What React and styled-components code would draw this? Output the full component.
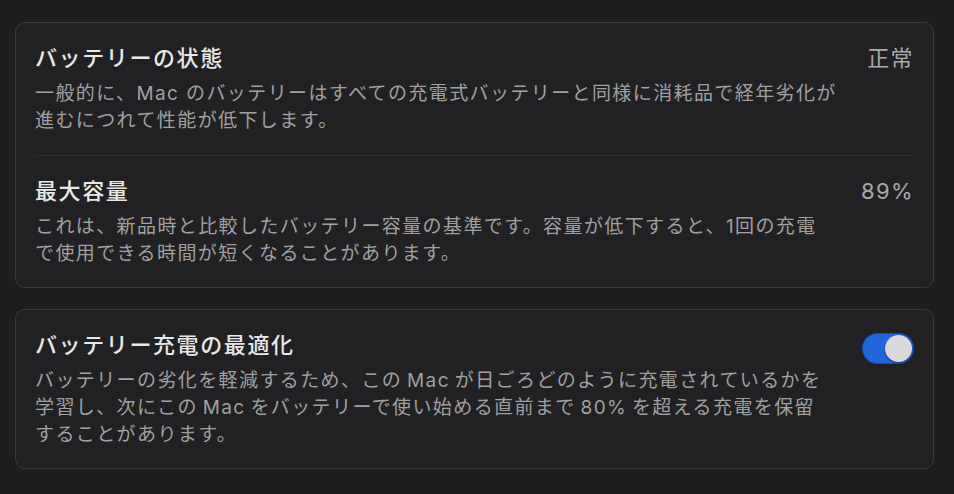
import React, { useState } from 'react';
import styled, { createGlobalStyle } from 'styled-components';

const GlobalStyle = createGlobalStyle`
  html, body {
    margin: 0;
    padding: 0;
    background: #1e1e1f;
  }
  body {
    font-family: Inter, "Noto Sans CJK JP", sans-serif;
    -webkit-font-smoothing: antialiased;
  }
`;

const Page = styled.div`
  width: 954px;
  height: 494px;
  box-sizing: border-box;
  padding: 22px 20px 0 15px;
  display: flex;
  flex-direction: column;
  gap: 21px;
  background: #1e1e1f;
`;

const Card = styled.section`
  border: 1px solid #3b3b3d;
  border-radius: 10px;
  background: #212123;
  padding: 0 19px;
`;

const Row = styled.div`
  display: flex;
  align-items: flex-start;
  justify-content: space-between;
  padding: ${p => (p.$last ? '21px 0 20px' : '21px 0 21px')};
  border-bottom: ${p => (p.$last ? 'none' : '1px solid #2e2e30')};
`;

const Text = styled.div`
  display: flex;
  flex-direction: column;
  gap: 8px;
`;

const Title = styled.h2`
  margin: 0;
  font-size: 22px;
  line-height: 28px;
  font-weight: 500;
  letter-spacing: 1.6px;
  color: #e8e8e8;
`;

const Description = styled.p`
  margin: 0;
  font-size: 19px;
  line-height: 27px;
  font-weight: 400;
  letter-spacing: 1.4px;
  color: #a0a0a1;
  white-space: nowrap;
`;

const Value = styled.div`
  font-size: 22px;
  line-height: 28px;
  letter-spacing: 1.4px;
  color: #a9a9aa;
  white-space: nowrap;
`;

const Switch = styled.button`
  width: 52px;
  height: 31px;
  margin-top: 2px;
  padding: 0;
  border: none;
  border-radius: 16px;
  background: ${p => (p.$on ? '#1f65dc' : '#3a3a3c')};
  display: flex;
  align-items: center;
  justify-content: ${p => (p.$on ? 'flex-end' : 'flex-start')};
  cursor: pointer;
  box-shadow: inset 0 0 0 1px rgba(0, 0, 0, 0.25);
`;

const Knob = styled.span`
  width: 27px;
  height: 27px;
  margin: 0 2px;
  border-radius: 50%;
  background: #d9d9d9;
  box-shadow: 0 1px 2px rgba(0, 0, 0, 0.4);
`;

function SettingRow({ title, lines, children, last }) {
  return (
    <Row $last={last}>
      <Text>
        <Title>{title}</Title>
        <Description>
          {lines.map((line, i) => (
            <React.Fragment key={i}>
              {i > 0 && <br />}
              {line}
            </React.Fragment>
          ))}
        </Description>
      </Text>
      {children}
    </Row>
  );
}

export default function App() {
  const [optimized, setOptimized] = useState(true);

  return (
    <>
      <GlobalStyle />
      <Page>
        <Card>
          <SettingRow
            title="バッテリーの状態"
            lines={[
              '一般的に、Mac のバッテリーはすべての充電式バッテリーと同様に消耗品で経年劣化が',
              '進むにつれて性能が低下します。',
            ]}
          >
            <Value>正常</Value>
          </SettingRow>
          <SettingRow
            last
            title="最大容量"
            lines={[
              'これは、新品時と比較したバッテリー容量の基準です。容量が低下すると、1回の充電',
              'で使用できる時間が短くなることがあります。',
            ]}
          >
            <Value>89%</Value>
          </SettingRow>
        </Card>
        <Card>
          <SettingRow
            last
            title="バッテリー充電の最適化"
            lines={[
              'バッテリーの劣化を軽減するため、この\u2009Mac\u2009が日ごろどのように充電されているかを',
              '学習し、次にこの\u2009Mac\u2009をバッテリーで使い始める直前まで\u200980%\u2009を超える充電を保留',
              'することがあります。',
            ]}
          >
            <Switch $on={optimized} onClick={() => setOptimized(v => !v)} aria-label="バッテリー充電の最適化">
              <Knob />
            </Switch>
          </SettingRow>
        </Card>
      </Page>
    </>
  );
}
